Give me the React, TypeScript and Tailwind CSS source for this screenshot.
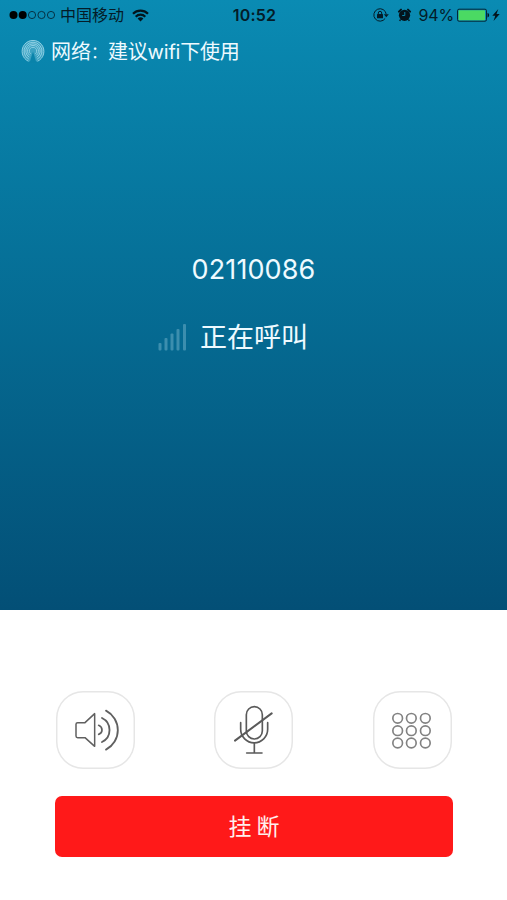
import type { ReactNode } from 'react';

const CJK = "font-['Inter','Noto_Sans_CJK_SC',sans-serif]";

function StatusBar() {
  return (
    <div className="flex h-[30px] items-center justify-between pl-[9px] pr-[7px] text-[#041c28]">
      <div className="flex w-[190px] items-center">
        <svg width="47" height="12" viewBox="0 0 47 12" fill="none" stroke="currentColor">
          <circle cx="4.5" cy="6" r="4" fill="#000" stroke="none" />
          <circle cx="13.7" cy="6" r="4" fill="#000" stroke="none" />
          <circle cx="23" cy="6" r="3.6" strokeWidth="0.8" />
          <circle cx="32.5" cy="6" r="3.6" strokeWidth="0.8" />
          <circle cx="42" cy="6" r="3.6" strokeWidth="0.8" />
        </svg>
        <span className="ml-[4px] whitespace-nowrap text-[16px] leading-none">中国移动</span>
        <svg className="ml-[8px]" width="17" height="13" viewBox="0 0 17 13" fill="none" stroke="#03141c" strokeWidth="2.2">
          <path d="M1 4.8a10.6 10.6 0 0 1 15 0" />
          <path d="M3.7 7.7a6.8 6.8 0 0 1 9.6 0" />
          <path d="M8.5 12.5L5.6 9.6a4.1 4.1 0 0 1 5.8 0z" fill="#03141c" stroke="none" />
        </svg>
      </div>
      <span className="text-[16px] font-semibold leading-none tracking-[0.2px]">10:52</span>
      <div className="flex w-[190px] items-center justify-end">
        <svg width="17" height="14" viewBox="0 0 17 14" fill="none" stroke="currentColor">
          <path d="M12.2 10.4A6.2 6.2 0 1 1 13.2 6.2" strokeWidth="1" />
          <path d="M10.8 6.2h5l-2.5 3z" fill="currentColor" stroke="none" />
          <rect x="4" y="6" width="6" height="4.3" rx="0.5" fill="currentColor" stroke="none" />
          <path d="M5.3 6V5a1.7 1.7 0 0 1 3.4 0v1" strokeWidth="1" />
        </svg>
        <svg className="ml-[7px]" width="15" height="14" viewBox="0 0 15 14">
          <circle cx="7.5" cy="7.3" r="5.6" fill="#03141c" />
          <path d="M1.9 3.6L4 1.6M13.1 3.6L11 1.6" stroke="#03141c" strokeWidth="2" strokeLinecap="round" />
          <path d="M3.5 11.5L2.7 13M11.5 11.5l.8 1.5" stroke="#03141c" strokeWidth="1.4" />
          <path d="M7.8 4v3.5H5.2" fill="none" stroke="#0a86ad" strokeWidth="1" />
        </svg>
        <span className="ml-[7px] text-[16px] leading-none tracking-[-0.2px]">94%</span>
        <svg className="ml-[3px]" width="34" height="14" viewBox="0 0 34 14">
          <rect x="0.5" y="1.2" width="29" height="12" rx="1.5" fill="none" stroke="currentColor" strokeWidth="0.9" />
          <rect x="1.6" y="2.2" width="26.4" height="10" rx="0.6" fill="#4bd963" />
          <path d="M30.500 5c2.200.6 2.200 3.800 0 4.400z" fill="#03141c" />
        </svg>
        <svg className="ml-px" width="8" height="12" viewBox="0 0 8 12" fill="#03141c">
          <path d="M6.300 0L0.300 6.700h3L1.500 12l6.200-7H4.500z" />
        </svg>
      </div>
    </div>
  );
}

function NetworkIcon() {
  return (
    <svg width="24" height="24" viewBox="0 0 24 24" fill="none" stroke="#8fd0e4" strokeWidth="1">
      <circle cx="12" cy="12" r="11" fill="#3ba2c2" stroke="none" />
      <path d="M12 12.500L15.500 24h-7z" fill="#0983aa" stroke="none" />
      <path d="M7.500 22.300a10.900 10.900 0 1 1 9 0" />
      <path d="M7.800 20.200a9 9 0 1 1 8.400 0" />
      <path d="M8.300 18.200a7.200 7.200 0 1 1 7.400 0" />
      <path d="M8.800 16.400a5.500 5.500 0 1 1 6.400 0" />
      <path d="M9.600 14.800a3.700 3.700 0 1 1 4.800 0" />
    </svg>
  );
}

function SignalBars() {
  return (
    <svg width="30" height="28" viewBox="0 0 30 28" fill="#3c8eae">
      <rect x="0.500" y="19" width="3" height="7.500" rx="1" />
      <rect x="6.500" y="14" width="3" height="12.500" rx="1" />
      <rect x="12.500" y="9.500" width="3" height="17" rx="1" />
      <rect x="18.500" y="5" width="3" height="21.500" rx="1" />
      <rect x="25" y="0" width="3" height="26.500" rx="1" />
    </svg>
  );
}

function RoundButton({ label, children }: { label: string; children: ReactNode }) {
  return (
    <button
      aria-label={label}
      className="flex h-[78px] w-[79px] items-center justify-center rounded-[27px] shadow-[inset_0_0_0_1.5px_#e6e6e6]"
    >
      {children}
    </button>
  );
}

export default function App() {
  return (
    <div className={`flex h-[900px] w-[507px] flex-col bg-white ${CJK}`}>
      <section className="flex h-[609.500px] flex-col bg-linear-to-b from-[#0a8bb3] to-[#034f76] text-[#eefaff]">
        <StatusBar />
        <div className="mt-[9px] flex h-6 items-center pl-[21px]">
          <NetworkIcon />
          <span className="ml-[6px] whitespace-nowrap pt-px text-[20px] leading-6">网络</span>
          <span className="mr-px w-[16px] pt-px text-[16px] leading-6">：</span>
          <span className="whitespace-nowrap pt-px text-[20px] leading-6 tracking-[-0.200px]">建议wifi下使用</span>
        </div>
        <div className="mt-[189px] text-center text-[27px] leading-9 tracking-[0.1px]">02110086</div>
        <div className="mt-[30px] flex h-10 items-center pl-[158px]">
          <SignalBars />
          <span className="ml-[12px] text-[27px] leading-10">正在呼叫</span>
        </div>
      </section>

      <section className="flex flex-1 flex-col px-[55px] pt-[81.500px]">
        <div className="flex justify-between pl-[0.500px] pr-[0.400px]">
          <RoundButton label="扬声器">
            <svg width="79" height="78" viewBox="33 33 237 234" fill="none" stroke="#606060" strokeLinecap="round" strokeLinejoin="round">
              <path d="M98 128h22l29-27v98l-29-26H98q-5 0-5-5v-35q0-5 5-5z" strokeWidth="4.500" />
              <path d="M161 136q10 4 10 14t-10 13" strokeWidth="5" />
              <path d="M171 114a40 40 0 0 1 0 72" strokeWidth="5.500" />
              <path d="M183 92a66 66 0 0 1 0 117" strokeWidth="5.500" />
            </svg>
          </RoundButton>
          <RoundButton label="静音">
            <svg width="79" height="78" viewBox="28 33 237 234" fill="none" stroke="#5a5a5a" strokeWidth="5" strokeLinecap="round">
              <rect x="125" y="80" width="48" height="97" rx="24" />
              <path d="M108 128v20a40.500 40.500 0 0 0 81 0v-20" />
              <path d="M149 190v29M126 219h46" />
              <path d="M91 182L201 100" strokeWidth="6" />
            </svg>
          </RoundButton>
          <RoundButton label="键盘">
            <svg width="79" height="78" viewBox="30 33 237 234" fill="none" stroke="#828282" strokeWidth="5">
              {[115, 152, 189].map((y) =>
                [104, 145, 187].map((x) => <circle key={`${x}-${y}`} cx={x} cy={y} r="14.500" />),
              )}
            </svg>
          </RoundButton>
        </div>
        <button className="mt-[27px] flex h-[61px] w-[398px] items-center justify-center gap-[5px] rounded-[7px] bg-[#ff1919] pt-[2px] text-[23px] text-[#fff0ee]">
          <span>挂</span>
          <span>断</span>
        </button>
      </section>
    </div>
  );
}
